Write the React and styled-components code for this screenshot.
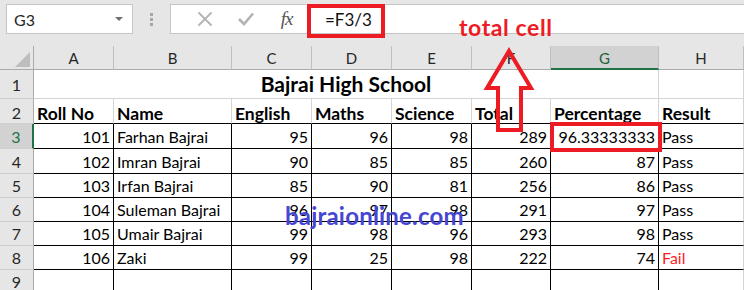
import React from 'react';
import styled, { createGlobalStyle } from 'styled-components';

const GlobalStyle = createGlobalStyle`
  html, body { margin: 0; padding: 0; background: #ffffff; }
  body { font-family: Lato, "Open Sans", sans-serif; }
  #root { width: 744px; height: 290px; }
`;

const RED = '#ed1c24';
const GREEN = '#217346';
const GRID = '#d4d4d4';
const INK = '#000000';

const Page = styled.div`
  position: relative;
  width: 744px;
  height: 290px;
  overflow: hidden;
  background: #e6e6e6;
`;

const Toolbar = styled.div`
  display: flex;
  align-items: flex-start;
  height: 46px;
  padding: 4px 0 0 6px;
  box-sizing: border-box;
`;

const Box = styled.div`
  height: 30px;
  box-sizing: border-box;
  background: #ffffff;
  border: 1px solid #c6c6c6;
  display: flex;
  align-items: center;
`;

const NameBox = styled(Box)`
  width: 127px;
  justify-content: space-between;
  padding: 0 9px 0 7px;
  font-size: 16px;
  color: #262626;
`;

const Caret = styled.span`
  width: 0;
  height: 0;
  border-left: 4px solid transparent;
  border-right: 4px solid transparent;
  border-top: 4px solid #707070;
`;

const Grip = styled.div`
  width: 37px;
  height: 30px;
  display: flex;
  flex-direction: column;
  align-items: center;
  justify-content: center;
  gap: 2px;
`;

const GripDot = styled.span`
  width: 3px;
  height: 3px;
  background: #a6a6a6;
`;

const FxBox = styled(Box)`
  width: 137px;
  border-right: none;
  padding-left: 14px;
  gap: 0;
`;

const FxSlot = styled.div`
  width: 44px;
  display: flex;
  align-items: center;
  justify-content: center;
`;

const FxText = styled.span`
  font-family: "Liberation Serif", "DejaVu Serif", serif;
  font-style: italic;
  font-size: 19px;
  color: #555555;
  letter-spacing: -1px;
`;

const FormulaInput = styled(Box)`
  flex: 1;
  border-right: none;
  padding-left: 17px;
  font-size: 17px;
  color: #111111;
`;

const Sheet = styled.div`
  display: grid;
  grid-template-columns: 34px 80px 118px 80px 80px 80px 79px 108px 85px;
  grid-template-rows: 24px 29px 25px 25px 25px 24px 24px 24px 24px 24px;
  background: #ffffff;
`;

const Corner = styled.div`
  position: relative;
  background: #e6e6e6;
  border-right: 1px solid #ababab;
  border-bottom: 1px solid #ababab;
  box-sizing: border-box;
  &::after {
    content: '';
    position: absolute;
    right: 3px;
    bottom: 2px;
    width: 0;
    height: 0;
    border-left: 15px solid transparent;
    border-bottom: 15px solid #bdbdbd;
  }
`;

const ColHead = styled.div`
  box-sizing: border-box;
  background: ${p => (p.$selected ? '#d2d2d2' : '#e6e6e6')};
  border-right: 1px solid #bfbfbf;
  border-bottom: ${p => (p.$selected ? `2px solid ${GREEN}` : '1px solid #ababab')};
  color: ${p => (p.$selected ? '#1f5f3b' : '#262626')};
  font-size: 15px;
  line-height: 1;
  display: flex;
  align-items: flex-end;
  justify-content: center;
  padding-bottom: ${p => (p.$selected ? '2px' : '3px')};
`;

const RowHead = styled.div`
  box-sizing: border-box;
  background: ${p => (p.$selected ? '#d2d2d2' : '#e6e6e6')};
  border-right: ${p => (p.$selected ? `2px solid ${GREEN}` : '1px solid #ababab')};
  border-bottom: 1px solid #cfcfcf;
  color: ${p => (p.$selected ? GREEN : '#262626')};
  font-size: 16px;
  line-height: 1;
  display: flex;
  align-items: flex-end;
  justify-content: center;
  padding-bottom: ${p => p.$pb}px;
`;

const Cell = styled.div`
  box-sizing: border-box;
  grid-column: ${p => (p.$span ? `span ${p.$span}` : 'auto')};
  border-right: 1px solid ${p => p.$rb || GRID};
  border-bottom: 1px solid ${p => p.$bb || GRID};
  display: flex;
  align-items: flex-end;
  justify-content: ${p =>
    p.$align === 'right' ? 'flex-end' : p.$align === 'center' ? 'center' : 'flex-start'};
  padding: 0 3px ${p => p.$pb ?? 3}px 3px;
  font-size: ${p => p.$size || 16}px;
  font-weight: ${p => (p.$bold ? 700 : 400)};
  line-height: 1;
  color: ${p => p.$color || INK};
  white-space: nowrap;
  overflow: visible;
`;

const Outline = styled.div`
  position: absolute;
  box-sizing: border-box;
  border: 4px solid ${RED};
  pointer-events: none;
`;

const Callout = styled.div`
  position: absolute;
  left: 459px;
  top: 16px;
  font-size: 23px;
  font-weight: 700;
  letter-spacing: 0.6px;
  line-height: 1;
  color: ${RED};
  white-space: nowrap;
`;

const Watermark = styled.div`
  position: absolute;
  left: 285px;
  top: 204px;
  font-size: 24px;
  font-weight: 700;
  letter-spacing: 0.2px;
  line-height: 1;
  color: #4646d2;
  white-space: nowrap;
`;

const Arrow = styled.svg`
  position: absolute;
  left: 480px;
  top: 42px;
  overflow: visible;
`;

const COLS = ['A', 'B', 'C', 'D', 'E', 'F', 'G', 'H'];
const HEADERS = ['Roll No', 'Name', 'English', 'Maths', 'Science', 'Total', 'Percentage', 'Result'];
const ROWS = [
  [101, 'Farhan Bajrai', 95, 96, 98, 289, '96.33333333', 'Pass'],
  [102, 'Imran Bajrai', 90, 85, 85, 260, 87, 'Pass'],
  [103, 'Irfan Bajrai', 85, 90, 81, 256, 86, 'Pass'],
  [104, 'Suleman Bajrai', 96, 97, 98, 291, 97, 'Pass'],
  [105, 'Umair Bajrai', 99, 98, 96, 293, 98, 'Pass'],
  [106, 'Zaki', 99, 25, 98, 222, 74, 'Fail'],
];

export default function App() {
  return (
    <Page>
      <GlobalStyle />
      <Toolbar>
        <NameBox>
          <span>G3</span>
          <Caret />
        </NameBox>
        <Grip>
          <GripDot />
          <GripDot />
          <GripDot />
        </Grip>
        <FxBox>
          <FxSlot>
            <svg width="16" height="16" viewBox="0 0 16 16">
              <path d="M1.5 1.5 L14.5 14.5 M14.5 1.5 L1.5 14.5" stroke="#b3b3b3" strokeWidth="1.8" fill="none" />
            </svg>
          </FxSlot>
          <FxSlot>
            <svg width="16" height="14" viewBox="0 0 16 14">
              <path d="M1 7 L6 12 L15 1.5" stroke="#b3b3b3" strokeWidth="2.6" fill="none" />
            </svg>
          </FxSlot>
          <FxSlot>
            <FxText>fx</FxText>
          </FxSlot>
        </FxBox>
        <FormulaInput>=F3/3</FormulaInput>
      </Toolbar>

      <Sheet>
        <Corner />
        {COLS.map(c => (
          <ColHead key={c} $selected={c === 'G'}>{c}</ColHead>
        ))}

        <RowHead $pb={5}>1</RowHead>
        <Cell $span={7} $align="center" $bold $size={21} $pb={4}>Bajrai High School</Cell>
        <Cell />

        <RowHead $pb={2}>2</RowHead>
        {HEADERS.map(h => (
          <Cell key={h} $bold $size={17.5} $pb={1} $bb={INK}>{h}</Cell>
        ))}

        {ROWS.map((r, ri) => (
          <React.Fragment key={r[0]}>
            <RowHead $selected={ri === 0} $pb={3}>{ri + 3}</RowHead>
            {r.map((v, ci) => (
              <Cell
                key={ci}
                $align={typeof v === 'number' || ci === 6 ? 'right' : 'left'}
                $rb={ci < 7 ? INK : GRID}
                $bb={INK}
                $color={v === 'Fail' ? '#ff1e1e' : INK}
              >
                {v}
              </Cell>
            ))}
          </React.Fragment>
        ))}

        <RowHead $pb={3}>9</RowHead>
        {COLS.map((c, ci) => (
          <Cell key={c} $rb={ci < 7 ? INK : GRID} $bb={INK} />
        ))}
      </Sheet>

      <Outline style={{ left: 307, top: 4, width: 78, height: 34 }} />
      <Outline style={{ left: 550, top: 122, width: 112, height: 30 }} />
      <Callout>total cell</Callout>
      <Arrow width="60" height="95" viewBox="0 0 60 95">
        <path
          d="M29 9 L51 46 L41 46 L41 88 L18 88 L18 46 L7 46 Z"
          fill="none"
          stroke={RED}
          strokeWidth="4"
          strokeLinejoin="miter"
          strokeMiterlimit="10"
        />
      </Arrow>
      <Watermark>bajraionline.com</Watermark>
    </Page>
  );
}
